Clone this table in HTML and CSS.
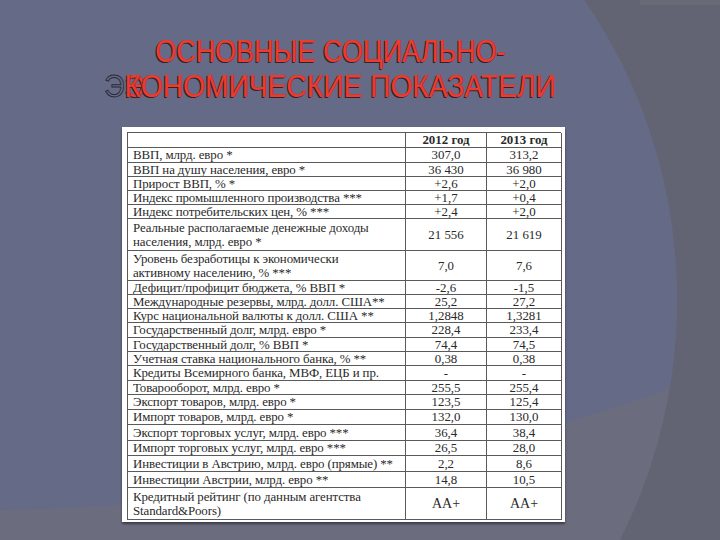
FILE: index.html
```html
<!DOCTYPE html>
<html lang="ru">
<head>
<meta charset="utf-8">
<title>Основные социально-экономические показатели</title>
<link rel="stylesheet" href="styles.css">
</head>
<body>
<div class="slide">
  <svg class="backdrop" width="720" height="540" viewBox="0 0 720 540" aria-hidden="true">
    <defs>
      <clipPath id="oval">
        <ellipse cx="200" cy="300" rx="477" ry="506"/>
      </clipPath>
    </defs>
    <rect width="720" height="540" fill="#626474"/>
    <rect x="640" y="0" width="80" height="5" fill="#686a78"/>
    <ellipse cx="200" cy="300" rx="477" ry="506" fill="#6b6d7e"/>
    <path d="M0,0 H720 V370 C560,432 300,505 0,510 Z" fill="#656a86" clip-path="url(#oval)"/>
  </svg>
  <div class="content">
    <h1 class="title">
      <span class="line one">ОСНОВНЫЕ СОЦИАЛЬНО-</span>
      <span class="line two"><span class="ghost">Э</span><span class="dup">Э</span>КОНОМИЧЕСКИЕ ПОКАЗАТЕЛИ</span>
    </h1>
    <div class="sheet">
      <div class="tbl">
        <div class="c l"></div><div class="c v b">2012 год</div><div class="c v b">2013 год</div>
        <div class="c l">ВВП, млрд. евро *</div><div class="c v">307,0</div><div class="c v">313,2</div>
        <div class="c l">ВВП на душу населения, евро *</div><div class="c v">36 430</div><div class="c v">36 980</div>
        <div class="c l">Прирост ВВП, % *</div><div class="c v">+2,6</div><div class="c v">+2,0</div>
        <div class="c l">Индекс промышленного производства ***</div><div class="c v">+1,7</div><div class="c v">+0,4</div>
        <div class="c l">Индекс потребительских цен, % ***</div><div class="c v">+2,4</div><div class="c v">+2,0</div>
        <div class="c l">Реальные располагаемые денежные доходы<br>населения, млрд. евро *</div><div class="c v">21 556</div><div class="c v">21 619</div>
        <div class="c l">Уровень безработицы к экономически<br>активному населению, % ***</div><div class="c v">7,0</div><div class="c v">7,6</div>
        <div class="c l">Дефицит/профицит бюджета, % ВВП *</div><div class="c v">-2,6</div><div class="c v">-1,5</div>
        <div class="c l">Международные резервы, млрд. долл. США**</div><div class="c v">25,2</div><div class="c v">27,2</div>
        <div class="c l">Курс национальной валюты к долл. США **</div><div class="c v">1,2848</div><div class="c v">1,3281</div>
        <div class="c l">Государственный долг, млрд. евро *</div><div class="c v">228,4</div><div class="c v">233,4</div>
        <div class="c l">Государственный долг, % ВВП *</div><div class="c v">74,4</div><div class="c v">74,5</div>
        <div class="c l">Учетная ставка национального банка, % **</div><div class="c v">0,38</div><div class="c v">0,38</div>
        <div class="c l">Кредиты Всемирного банка, МВФ, ЕЦБ и пр.</div><div class="c v">-</div><div class="c v">-</div>
        <div class="c l">Товарооборот, млрд. евро *</div><div class="c v">255,5</div><div class="c v">255,4</div>
        <div class="c l">Экспорт товаров, млрд. евро *</div><div class="c v">123,5</div><div class="c v">125,4</div>
        <div class="c l">Импорт товаров, млрд. евро *</div><div class="c v">132,0</div><div class="c v">130,0</div>
        <div class="c l">Экспорт торговых услуг, млрд. евро ***</div><div class="c v">36,4</div><div class="c v">38,4</div>
        <div class="c l">Импорт торговых услуг, млрд. евро ***</div><div class="c v">26,5</div><div class="c v">28,0</div>
        <div class="c l">Инвестиции в Австрию, млрд. евро (прямые) **</div><div class="c v">2,2</div><div class="c v">8,6</div>
        <div class="c l">Инвестиции Австрии, млрд. евро **</div><div class="c v">14,8</div><div class="c v">10,5</div>
        <div class="c l">Кредитный рейтинг (по данным агентства<br>Standard&amp;Poors)</div><div class="c v big">AA+</div><div class="c v big">AA+</div>
      </div>
    </div>
  </div>
</div>
</body>
</html>
```
FILE: styles.css
```css
html, body {
  margin: 0;
  padding: 0;
}
body {
  width: 720px;
  height: 540px;
  overflow: hidden;
  background: #626474;
}
.slide {
  position: relative;
  width: 720px;
  height: 540px;
  overflow: hidden;
}
.backdrop {
  position: absolute;
  left: 0;
  top: 0;
  display: block;
}
.content {
  position: relative;
  padding-top: 34px;
}
.title {
  margin: 0;
  width: 660px;
  display: flex;
  flex-direction: column;
  align-items: center;
  font-family: "Liberation Sans", Arial, sans-serif;
  font-weight: normal;
  font-size: 31px;
  line-height: 35px;
  color: #ee3b2c;
  text-shadow: -1px 1px 0 #2a2330, 1px 0 0 #9c2c2a;
}
.line {
  display: block;
  white-space: nowrap;
}
.one {
  transform: scaleX(0.87);
}
.two {
  transform: scaleX(0.91);
}
.ghost {
  color: transparent;
  -webkit-text-stroke: 1px #2c2a36;
  text-shadow: none;
}
.dup {
  display: inline-block;
  width: 0;
  overflow: visible;
}
.sheet {
  margin: 23px 0 0 122px;
  width: 436px;
  padding: 5px 2px 2px 5px;
  background: #ffffff;
  box-shadow: 0 2px 2px rgba(20, 20, 30, 0.55);
}
.tbl {
  display: grid;
  grid-template-columns: 278px 81px 75px;
  grid-template-rows: 15px 15px 14px 14px 14px 14px 32px 30px 14px 14px 14px 15px 14px 14px 15px 14px 15px 15px 16px 15px 16px 16px 32px;
  border-left: 1px solid #5a5a5a;
  border-top: 1px solid #5a5a5a;
  box-sizing: border-box;
  width: 434px;
  font-family: "Liberation Serif", "Times New Roman", serif;
  font-size: 12.9px;
  line-height: 14px;
  color: #2a2a2a;
}
.c {
  border-right: 1px solid #5a5a5a;
  border-bottom: 1px solid #5a5a5a;
  display: flex;
  align-items: center;
  overflow: hidden;
  white-space: nowrap;
}
.l {
  padding-left: 5px;
  letter-spacing: -0.1px;
}
.v {
  justify-content: center;
}
.b {
  font-weight: bold;
}
.big {
  font-size: 14px;
}
```
